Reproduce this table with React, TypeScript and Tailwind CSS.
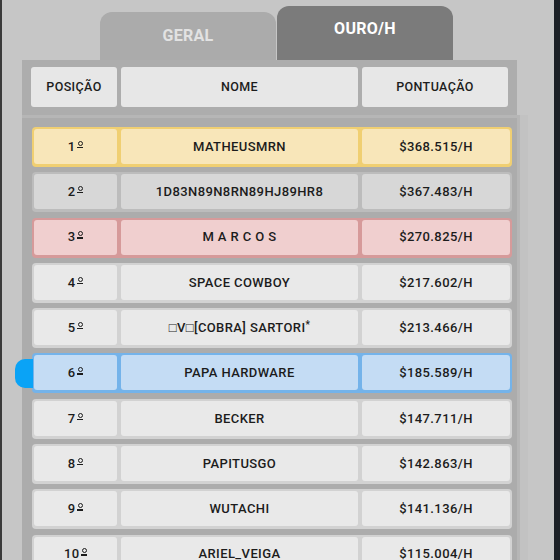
import React from "react";

type Row = { pos: string; name: string; score: string; kind: "gold" | "silver" | "bronze" | "normal" | "me" };

const rows: Row[] = [
  { pos: "1", name: "MATHEUSMRN", score: "$368.515/H", kind: "gold" },
  { pos: "2", name: "1D83N89N8RN89HJ89HR8", score: "$367.483/H", kind: "silver" },
  { pos: "3", name: "M A R C O S", score: "$270.825/H", kind: "bronze" },
  { pos: "4", name: "SPACE COWBOY", score: "$217.602/H", kind: "normal" },
  { pos: "5", name: "□V□[COBRA] SARTORI*", score: "$213.466/H", kind: "normal" },
  { pos: "6", name: "PAPA HARDWARE", score: "$185.589/H", kind: "me" },
  { pos: "7", name: "BECKER", score: "$147.711/H", kind: "normal" },
  { pos: "8", name: "PAPITUSGO", score: "$142.863/H", kind: "normal" },
  { pos: "9", name: "WUTACHI", score: "$141.136/H", kind: "normal" },
  { pos: "10", name: "ARIEL_VEIGA", score: "$115.004/H", kind: "normal" },
];

const rowStyles: Record<Row["kind"], { outer: string; cell: string }> = {
  gold: { outer: "bg-[#f0cf72]", cell: "bg-[#f8e6b9]" },
  silver: { outer: "bg-[#bcbcbc]", cell: "bg-[#d7d7d7]" },
  bronze: { outer: "bg-[#d69a9a]", cell: "bg-[#f0cfcf]" },
  normal: { outer: "bg-[#d2d2d2]", cell: "bg-[#e9e9e9]" },
  me: { outer: "bg-[#74b3ea]", cell: "bg-[#c4dcf4]" },
};

function Cell({ children, cls }: { children: React.ReactNode; cls: string }) {
  return (
    <div className={`${cls} rounded-[3px] flex items-center justify-center text-[13px] font-medium tracking-[0.4px] text-[#1c1c1c] whitespace-nowrap overflow-hidden`}>
      {children}
    </div>
  );
}

function Ordinal() {
  return (
    <span className="inline-flex flex-col items-center ml-[1.5px] relative top-[-2px]">
      <span className="w-[5px] h-[5px] rounded-full border-[1.4px] border-[#1c1c1c]" />
      <span className="w-[6px] h-[1.4px] bg-[#1c1c1c] mt-[1px]" />
    </span>
  );
}

export default function App() {
  return (
    <div className="w-[560px] h-[560px] overflow-hidden flex bg-[#c6c6c6] font-['Roboto',sans-serif]">
      <div className="w-[2px] h-full bg-[#3a3a3a]" />
      <div className="flex-1 h-full pl-[20px] flex flex-col">
        {/* Tabs */}
        <div className="h-[60px] flex items-end pl-[78px] gap-[1px]">
          <div className="w-[176px] h-[48px] rounded-t-[12px] bg-[#ababab] flex items-center justify-center pb-[1px]">
            <span className="text-[16px] font-bold text-[#e2e2e2] tracking-[0.3px]">GERAL</span>
          </div>
          <div className="w-[176px] h-[54px] rounded-t-[12px] bg-[#7b7b7b] flex justify-center pt-[13px]">
            <span className="text-[16px] font-bold text-white tracking-[0.3px] leading-[20px]">OURO/H</span>
          </div>
        </div>
        {/* Header */}
        <div className="w-[495px] bg-[#adadad] px-[9px] pt-[7px] pb-[8px]">
          <div className="grid grid-cols-[86px_237px_1fr] gap-[4px] h-[40px]">
            <Cell cls="bg-[#e7e7e7]"><span className="text-[12.5px]">POSIÇÃO</span></Cell>
            <Cell cls="bg-[#e7e7e7]"><span className="text-[12.5px]">NOME</span></Cell>
            <Cell cls="bg-[#e7e7e7]"><span className="text-[12.5px]">PONTUAÇÃO</span></Cell>
          </div>
        </div>
        {/* List */}
        <div className="flex flex-1 min-h-0">
          <div className="w-[495px] border-t-[3px] border-[#b6b6b6] bg-[#acacac] pl-[10px] pr-[5px] pt-[9px] flex flex-col gap-[5.3px]">
            {rows.map((r) => {
              const s = rowStyles[r.kind];
              return (
                <div key={r.pos} className={`relative shrink-0 h-[40px] rounded-[4px] ${s.outer} p-[2px] pb-[3px] grid grid-cols-[83px_237px_1fr] gap-[4px]`}>
                  {r.kind === "me" && (
                    <div className="absolute left-[-17px] top-[6px] w-[18px] h-[29px] rounded-l-[10px] bg-[#0aa3f6]" />
                  )}
                  <Cell cls={s.cell}>
                    {r.pos}
                    <Ordinal />
                  </Cell>
                  <Cell cls={s.cell}>
                    {r.name.endsWith("*") ? (
                      <>
                        {r.name.slice(0, -1)}
                        <span className="text-[10px] relative top-[-3px]">*</span>
                      </>
                    ) : (
                      r.name
                    )}
                  </Cell>
                  <Cell cls={s.cell}>{r.score}</Cell>
                </div>
              );
            })}
          </div>
          <div className="w-[3px] bg-[#b6b6b6]" />
          <div className="w-[8px] bg-[#c2c2c2]" />
        </div>
      </div>
      <div className="w-[6px] h-full bg-[#1b2026]" />
    </div>
  );
}
